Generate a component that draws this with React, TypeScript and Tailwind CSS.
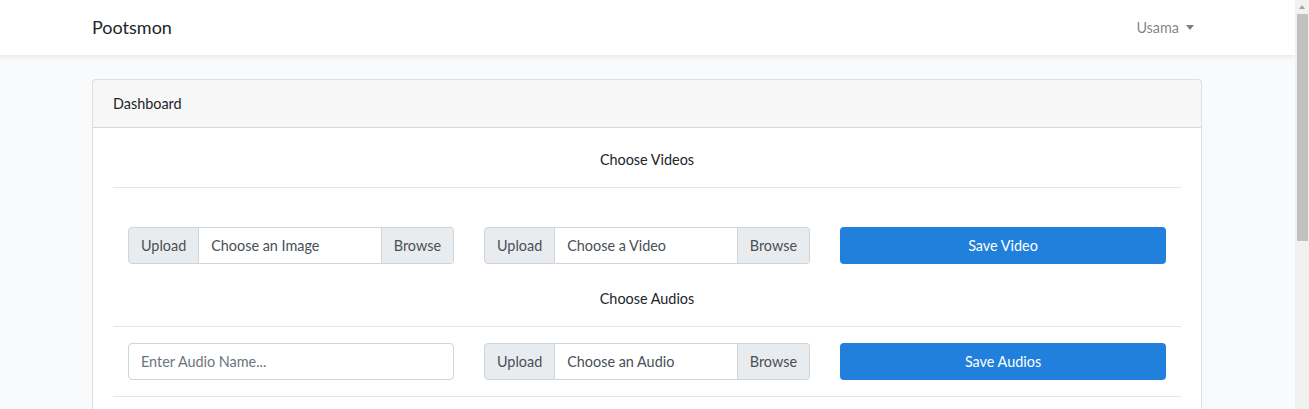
import React from "react";

function FileGroup({ label }: { label: string }) {
  return (
    <div className="flex h-[37px] w-full text-[14.4px] leading-[23px]">
      <div className="flex items-center rounded-l-[4px] border border-[#ced4da] bg-[#e9ecef] px-[12px] text-[#495057]">
        Upload
      </div>
      <div className="flex flex-1 items-center rounded-r-[4px] border border-l-0 border-[#ced4da] bg-white">
        <span className="pl-[12px] text-[#495057]">{label}</span>
        <span className="ml-auto flex h-full items-center rounded-r-[3px] border-l border-[#ced4da] bg-[#e9ecef] px-[12px] text-[#495057]">
          Browse
        </span>
      </div>
    </div>
  );
}

function SaveButton({ children }: { children: React.ReactNode }) {
  return (
    <button className="h-[37px] w-full rounded-[4px] bg-[#2180dc] text-[14.4px] leading-[23px] text-white">
      {children}
    </button>
  );
}

function Scrollbar() {
  return (
    <div className="flex w-[14px] shrink-0 flex-col items-center bg-[#f1f1f1]">
      <div className="flex h-[14px] w-full items-center justify-center">
        <span className="inline-block h-0 w-0 border-x-[3.5px] border-b-[4px] border-x-transparent border-b-[#a3a3a3]" />
      </div>
      <div className="ml-[1px] h-[227px] w-[11px] bg-[#c1c1c1]" />
    </div>
  );
}

export default function App() {
  return (
    <div className="flex h-[409px] overflow-hidden bg-[#f8fafc] font-['Lato','Noto_Sans',sans-serif] text-[14.4px] leading-[23px] text-[#212529]">
      <div className="min-w-0 flex-1">
        <nav className="h-[55px] bg-white shadow-[0_2px_4px_rgba(0,0,0,0.075)]">
          <div className="ml-[92px] flex h-full w-[1110px] items-center justify-between">
            <span className="text-[18px] text-[#212529]">Pootsmon</span>
            <span className="flex items-center pr-[8px] text-[rgba(0,0,0,0.5)]">
              Usama
              <span className="ml-[7px] inline-block h-0 w-0 border-x-[4.5px] border-t-[5px] border-x-transparent border-t-[rgba(0,0,0,0.5)]" />
            </span>
          </div>
        </nav>
        <main className="py-[24px]">
          <div className="ml-[92px] w-[1110px] rounded-[4px] border border-[rgba(0,0,0,0.125)] bg-white">
            <div className="h-[48px] border-b border-[rgba(0,0,0,0.125)] bg-[rgba(0,0,0,0.03)] px-[20px] py-[12px]">
              Dashboard
            </div>
            <div className="p-[20px]">
              <div className="text-center">Choose Videos</div>
              <hr className="mt-[16px] border-[rgba(0,0,0,0.1)]" />
              <div className="mt-[39px] grid grid-cols-3">
                <div className="px-[15px]">
                  <FileGroup label="Choose an Image" />
                </div>
                <div className="px-[15px]">
                  <FileGroup label="Choose a Video" />
                </div>
                <div className="px-[15px]">
                  <SaveButton>Save Video</SaveButton>
                </div>
              </div>
              <div className="mt-[23px] text-center">Choose Audios</div>
              <hr className="mt-[16px] border-[rgba(0,0,0,0.1)]" />
              <div className="mt-[16px] grid grid-cols-3">
                <div className="px-[15px]">
                  <input
                    placeholder="Enter Audio Name..."
                    className="h-[37px] w-full rounded-[4px] border border-[#ced4da] px-[12px] text-[14.4px] text-[#495057] placeholder:text-[#6c757d]"
                  />
                </div>
                <div className="px-[15px]">
                  <FileGroup label="Choose an Audio" />
                </div>
                <div className="px-[15px]">
                  <SaveButton>Save Audios</SaveButton>
                </div>
              </div>
              <hr className="mt-[16px] border-[rgba(0,0,0,0.1)]" />
              <div className="h-[220px]" />
            </div>
          </div>
        </main>
      </div>
      <Scrollbar />
    </div>
  );
}
